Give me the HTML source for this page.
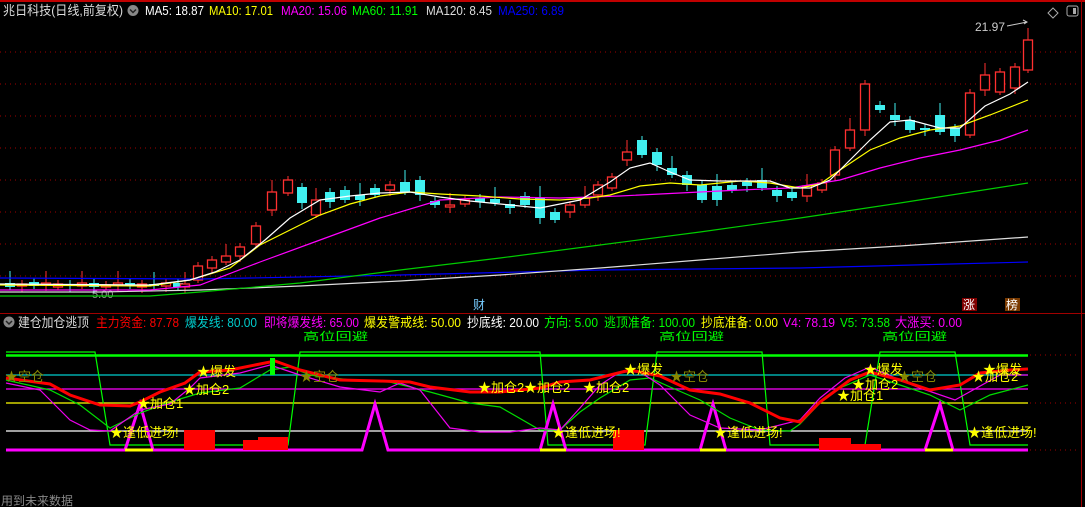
<!DOCTYPE html><html><head><meta charset="utf-8"><style>
body{margin:0;background:#000;width:1085px;height:507px;overflow:hidden;font-family:"Liberation Sans","Noto Sans CJK SC",sans-serif}
svg{position:absolute;left:0;top:0}
text{font-family:"Liberation Sans","Noto Sans CJK SC",sans-serif}
</style></head><body>
<svg id="s" width="1085" height="507" viewBox="0 0 1085 507">
<rect x="0" y="0" width="1085" height="2" fill="#c00000"/>
<line x1="0" y1="313.5" x2="1085" y2="313.5" stroke="#a00000"/>
<line x1="1081.5" y1="0" x2="1081.5" y2="507" stroke="#a00000"/>
<g stroke="#a00000" stroke-dasharray="1 4">
<line x1="0" y1="52" x2="1080" y2="52"/><line x1="0" y1="84" x2="1080" y2="84"/><line x1="0" y1="116" x2="1080" y2="116"/><line x1="0" y1="148" x2="1080" y2="148"/><line x1="0" y1="180" x2="1080" y2="180"/><line x1="0" y1="212" x2="1080" y2="212"/><line x1="0" y1="244" x2="1080" y2="244"/><line x1="0" y1="276" x2="1080" y2="276"/>
<line x1="1030" y1="355" x2="1080" y2="355"/><line x1="1030" y1="403" x2="1080" y2="403"/><line x1="1030" y1="450" x2="1080" y2="450"/>
</g>
<g font-size="13">
<text x="3" y="15" fill="#ddd" textLength="120" lengthAdjust="spacingAndGlyphs">兆日科技(日线,前复权)</text>
<circle cx="133" cy="10.5" r="5.5" fill="#888"/><path d="M130 9.5l3 3 3-3" stroke="#222" stroke-width="1.5" fill="none"/>
<text x="145" y="15" fill="#fff" textLength="59" lengthAdjust="spacingAndGlyphs">MA5: 18.87</text>
<text x="209" y="15" fill="#ff0" textLength="64" lengthAdjust="spacingAndGlyphs">MA10: 17.01</text>
<text x="281" y="15" fill="#f0f" textLength="66" lengthAdjust="spacingAndGlyphs">MA20: 15.06</text>
<text x="352" y="15" fill="#0f0" textLength="66" lengthAdjust="spacingAndGlyphs">MA60: 11.91</text>
<text x="426" y="15" fill="#ddd" textLength="66" lengthAdjust="spacingAndGlyphs">MA120: 8.45</text>
<text x="498" y="15" fill="#00f" textLength="66" lengthAdjust="spacingAndGlyphs">MA250: 6.89</text>
</g>
<path d="M1053 8l5 5-5 5-5-5z" stroke="#aaa" fill="none"/>
<rect x="1067" y="6" width="11" height="10" rx="2" stroke="#aaa" fill="none"/><rect x="1073" y="8" width="3" height="6" fill="#aaa"/>
<text x="975" y="31" fill="#ccc" font-size="12">21.97</text>
<path d="M1007 26l20-4m-4-2l4 2-3 2" stroke="#ccc" fill="none"/>
<text x="92" y="298" fill="#999" font-size="11">5.00</text>
<g id="cand"></g>
<g fill="none" stroke-width="1.2">
<polyline stroke="#00f" points="0,278 200,279 400,275 600,270 800,268 1028,262"/>
<polyline stroke="#ddd" points="0,292 100,292 200,290 300,286 400,281 500,275 600,268 700,260 800,252 900,246 1028,237"/>
<polyline stroke="#0c0" points="0,296 150,296 200,292 300,283 400,270 500,258 600,245 700,232 800,218 900,203 1028,183"/>
<polyline stroke="#f0f" points="0,290 150,290 200,285 260,262 320,240 380,218 440,200 500,197 560,198 620,196 680,193 740,190 790,188 840,180 880,168 920,158 960,150 1000,140 1028,130"/>
<polyline stroke="#ff0" points="0,285 150,286 190,280 230,268 260,245 290,230 320,215 350,204 380,196 410,192 440,194 480,196 520,199 560,200 590,198 610,195 640,186 670,183 700,185 740,181 770,183 800,188 820,184 840,170 870,150 900,138 930,130 960,126 990,115 1028,100"/>
<polyline stroke="#fff" points="0,284 150,285 190,280 215,272 240,260 265,240 290,218 320,200 350,196 380,193 410,192 440,197 470,201 510,205 540,208 580,200 610,182 630,168 650,163 670,172 690,180 720,181 750,181 770,181 790,188 810,188 830,180 850,160 870,140 890,122 910,120 940,128 960,128 985,106 1010,94 1028,82"/>
</g>
<rect x="962" y="298" width="15" height="13" fill="#800000"/><text x="963" y="309" fill="#fff" font-size="12">涨</text>
<rect x="1005" y="298" width="15" height="13" fill="#7a3a00"/><text x="1006" y="309" fill="#fff" font-size="12">榜</text>
<text x="473" y="309" fill="#7cf" font-size="12">财</text>
<g font-size="13">
<circle cx="9" cy="322" r="5.5" fill="#888"/><path d="M6 321l3 3 3-3" stroke="#222" stroke-width="1.5" fill="none"/>
<text x="18" y="327" fill="#ddd" textLength="71" lengthAdjust="spacingAndGlyphs">建仓加仓逃顶</text>
<text x="96" y="327" fill="#f00" textLength="83" lengthAdjust="spacingAndGlyphs">主力资金: 87.78</text>
<text x="185" y="327" fill="#0cc" textLength="72" lengthAdjust="spacingAndGlyphs">爆发线: 80.00</text>
<text x="264" y="327" fill="#f0f" textLength="95" lengthAdjust="spacingAndGlyphs">即将爆发线: 65.00</text>
<text x="364" y="327" fill="#ff0" textLength="97" lengthAdjust="spacingAndGlyphs">爆发警戒线: 50.00</text>
<text x="467" y="327" fill="#fff" textLength="72" lengthAdjust="spacingAndGlyphs">抄底线: 20.00</text>
<text x="544" y="327" fill="#0f0" textLength="54" lengthAdjust="spacingAndGlyphs">方向: 5.00</text>
<text x="604" y="327" fill="#0f0" textLength="91" lengthAdjust="spacingAndGlyphs">逃顶准备: 100.00</text>
<text x="701" y="327" fill="#ff0" textLength="77" lengthAdjust="spacingAndGlyphs">抄底准备: 0.00</text>
<text x="783" y="327" fill="#f0f" textLength="52" lengthAdjust="spacingAndGlyphs">V4: 78.19</text>
<text x="840" y="327" fill="#0f0" textLength="50" lengthAdjust="spacingAndGlyphs">V5: 73.58</text>
<text x="895" y="327" fill="#f0f" textLength="67" lengthAdjust="spacingAndGlyphs">大涨买: 0.00</text>
</g>
<g font-size="11" fill="#0f0"><text x="303" y="340" textLength="65" lengthAdjust="spacingAndGlyphs">高位回避</text><text x="659" y="340" textLength="65" lengthAdjust="spacingAndGlyphs">高位回避</text><text x="882" y="340" textLength="65" lengthAdjust="spacingAndGlyphs">高位回避</text></g>
<g stroke-width="1.2" fill="none">
<line x1="6" y1="355.5" x2="1028" y2="355.5" stroke="#0f0" stroke-width="2.5"/>
<line x1="6" y1="375" x2="1028" y2="375" stroke="#0cc"/>
<line x1="6" y1="389" x2="1028" y2="389" stroke="#f0f"/>
<line x1="6" y1="403" x2="1028" y2="403" stroke="#ff0"/>
<line x1="6" y1="431" x2="1028" y2="431" stroke="#fff"/>
<polyline stroke="#0f0" points="6,352 95,352 110,445 288,445 300,352 540,352 548,445 645,445 657,352 762,352 770,445 865,445 880,352 955,352 970,445 1028,445"/>
<polyline stroke="#f0f" stroke-width="3" points="6,450 125,450 140,404 153,450 362,450 375,404 388,450 540,450 553,404 566,450 700,450 713,404 726,450 925,450 940,404 953,450 1028,450"/>
<g stroke="#ff0" stroke-width="3"><line x1="125" y1="450" x2="153" y2="450"/><line x1="540" y1="450" x2="566" y2="450"/><line x1="700" y1="450" x2="726" y2="450"/><line x1="925" y1="450" x2="953" y2="450"/></g>
<polyline stroke="#0d0" points="6,380 50,390 80,405 110,428 140,413 170,402 200,393 240,388 270,370 290,367 310,375 350,380 390,382 430,392 470,403 500,407 540,430 560,430 580,412 600,398 630,380 650,378 670,387 700,400 730,418 760,430 790,431 800,424 820,403 840,388 870,375 900,385 930,395 960,410 990,395 1028,385"/>
<polyline stroke="#e0e" points="6,383 40,390 55,405 70,420 90,430 110,431 140,410 170,404 190,388 200,378 240,373 270,365 300,375 340,387 380,392 400,383 420,390 450,428 480,432 510,432 540,428 560,430 580,408 600,385 620,372 640,372 660,385 690,415 720,428 760,430 800,420 820,398 845,378 870,367 900,380 920,388 955,400 1000,375 1028,375"/>
<polyline stroke="#f00" stroke-width="3" points="6,378 50,384 70,395 100,405 130,406 140,402 160,392 185,383 200,372 230,370 260,364 275,361 300,370 340,380 380,381 410,382 430,387 470,392 500,392 540,388 560,382 590,380 610,375 630,370 660,376 690,390 720,394 750,403 780,418 800,422 820,402 850,380 870,372 900,380 930,390 960,385 980,373 1010,370 1028,369"/>
</g>
<rect x="270" y="358" width="5" height="17" fill="#0f0"/>
<g fill="#f00"><rect x="184" y="430" width="31" height="20"/><rect x="243" y="440" width="16" height="10"/><rect x="258" y="437" width="30" height="13"/><rect x="613" y="430" width="31" height="20"/><rect x="819" y="438" width="32" height="12"/><rect x="850" y="444" width="31" height="6"/></g>
<g font-size="13" fill="#ff0">
<text x="5" y="381" fill="#880">★空仓</text><text x="300" y="381" fill="#880">★空仓</text><text x="670" y="381" fill="#880">★空仓</text><text x="898" y="381" fill="#880">★空仓</text>
<text x="110" y="437">★逢低进场!</text><text x="552" y="437">★逢低进场!</text><text x="714" y="437">★逢低进场!</text><text x="968" y="437">★逢低进场!</text>
<text x="137" y="408">★加仓1</text><text x="183" y="394">★加仓2</text><text x="197" y="376">★爆发</text>
<text x="478" y="392">★加仓2</text><text x="524" y="392">★加仓2</text><text x="583" y="392">★加仓2</text><text x="624" y="374">★爆发</text>
<text x="837" y="400">★加仓1</text><text x="852" y="389">★加仓2</text><text x="864" y="374">★爆发</text>
<text x="972" y="381">★加仓2</text><text x="983" y="374">★爆发</text>
</g>
<text x="1" y="505" fill="#888" font-size="12">用到未来数据</text>
</svg>
<script>
var d=[[10,283,287],[22,286,284],[34,282,286],[46,285,283],[58,287,284],[70,284,286],[82,286,283],[94,283,287],[106,286,285],[118,285,283],[130,283,286],[142,287,284],[154,284,286],[166,286,283],[178,283,287],[185,287,284],[198,280,266],[212,268,260],[226,262,256],[240,256,247],[256,244,226],[272,210,192],[288,193,180],[302,187,203],[316,215,200],[330,192,202],[345,190,200],[360,195,200],[375,188,195],[390,190,185],[405,182,192],[420,180,195],[435,201,205],[450,207,205],[465,204,200],[480,198,202],[495,199,203],[510,204,208],[525,196,205],[540,198,218],[555,212,220],[570,212,205],[585,205,198],[598,195,185],[612,188,177],[627,160,152],[642,140,155],[657,152,165],[672,168,175],[687,175,185],[702,185,200],[717,186,200],[732,185,190],[747,182,186],[762,180,188],[777,190,196],[792,192,198],[807,196,186],[822,190,183],[835,175,150],[850,148,130],[865,130,84],[880,105,110],[895,115,120],[910,120,130],[925,128,130],[940,115,132],[955,128,136],[970,135,93],[985,90,75],[1000,92,72],[1015,88,67],[1028,70,40]];
var g=document.getElementById('cand'),h='';
d.forEach(function(c,i){var x=c[0],o=c[1],cl=c[2],up=cl<o,t=Math.min(o,cl),b=Math.max(o,cl);if(b-t<2)b=t+2;var col=up?'#ff3030':'#40f0f0';var hi=t-(i%3==0?12:4),lo=b+(i%2?6:3);
h+='<line x1="'+x+'" y1="'+hi+'" x2="'+x+'" y2="'+lo+'" stroke="'+col+'"/>';
h+=up?'<rect x="'+(x-4.5)+'" y="'+t+'" width="9" height="'+(b-t)+'" fill="#000" stroke="'+col+'" stroke-width="1.3"/>':'<rect x="'+(x-5)+'" y="'+t+'" width="10" height="'+(b-t)+'" fill="'+col+'"/>';});
g.innerHTML=h;
</script>
</body></html>
